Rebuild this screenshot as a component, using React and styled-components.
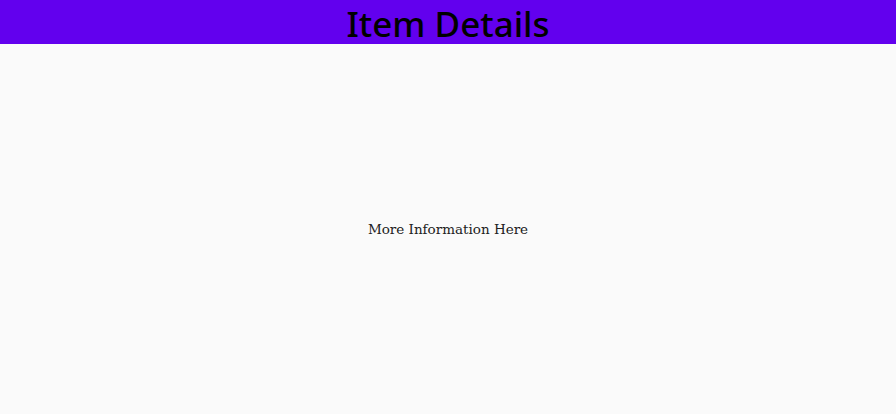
import styled, { createGlobalStyle } from "styled-components";

const GlobalStyle = createGlobalStyle`
    html, body {
        margin: 0;
        padding: 0;
        height: 100%;
        background-color: #fafafa;
    }
    #root {
        height: 100%;
    }
`;

function App() {
    return (
        <Page>
            <GlobalStyle />
            <Header>
                <Title>Item Details</Title>
            </Header>
            <Body>
                <Info>More Information Here</Info>
            </Body>
        </Page>
    );
}

const Page = styled.div`
    display: flex;
    flex-direction: column;
    height: 100vh;
    background-color: #fafafa;
`;
const Header = styled.header`
    display: flex;
    justify-content: center;
    align-items: flex-start;
    height: 44px;
    background-color: #6200ee;
    overflow: hidden;
`;
const Title = styled.h1`
    margin: 5px 0 0;
    font-family: "Noto Sans", sans-serif;
    font-weight: 500;
    font-size: 35px;
    line-height: 38px;
    color: #000;
`;
const Body = styled.main`
    flex: 1;
    display: flex;
    justify-content: center;
    align-items: center;
`;
const Info = styled.div`
    font-family: "DejaVu Serif", serif;
    font-size: 13.5px;
    color: #212121;
`;

export default App;
